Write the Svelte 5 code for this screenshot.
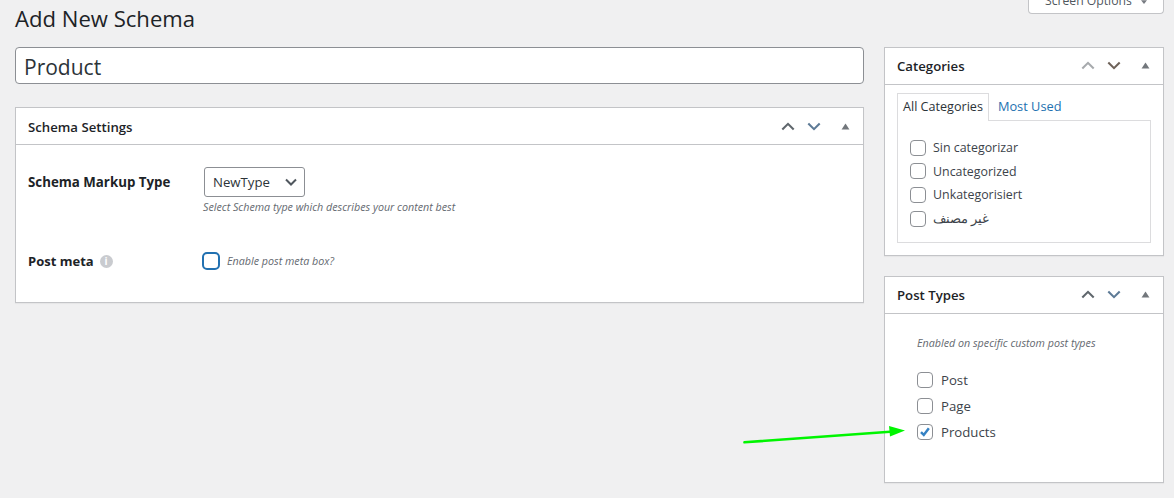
<script>
  const cats = ['Sin categorizar', 'Uncategorized', 'Unkategorisiert', 'غير مصنف'];
  const types = [
    { label: 'Post', on: false },
    { label: 'Page', on: false },
    { label: 'Products', on: true }
  ];
</script>

{#snippet handles(upDim, downWarm)}
  <div class="handles">
    <svg class="chev" class:dim={upDim} viewBox="0 0 16 10"><path d="M1.5 8.5 8 2l6.5 6.5" /></svg>
    <svg class="chev" class:warm={downWarm} viewBox="0 0 16 10"><path d="M1.5 1.5 8 8l6.5-6.5" /></svg>
    <svg class="tri" viewBox="0 0 10 8"><path d="M5 .5 9.5 7.5H.5z" /></svg>
  </div>
{/snippet}

<div class="page">
  <div class="topbar">
    <h1>Add New Schema</h1>
    <div class="screen-options"><span>Screen Options</span><svg viewBox="0 0 8 5"><path d="M0 0h8L4 5z" /></svg></div>
  </div>

  <div class="columns">
    <main>
      <div class="title-input">Product</div>

      <section class="box settings">
        <header><h2>Schema Settings</h2>{@render handles(false, false)}</header>
        <div class="settings-body">
          <div class="row first">
            <div class="label">Schema Markup Type</div>
            <div>
              <div class="select">NewType
                <svg viewBox="0 0 12 8"><path d="M1 1.5 6 6.5l5-5" /></svg>
              </div>
              <p class="hint sel-hint">Select Schema type which describes your content best</p>
            </div>
          </div>
          <div class="row second">
            <div class="label">Post meta <span class="info">i</span></div>
            <div class="meta">
              <span class="check focus"></span>
              <span class="hint">Enable post meta box?</span>
            </div>
          </div>
        </div>
      </section>
    </main>

    <aside>
      <section class="box cats">
        <header><h2>Categories</h2>{@render handles(true, true)}</header>
        <div class="cats-body">
          <div class="tabs"><span class="tab active">All Categories</span><span class="tab link">Most Used</span></div>
          <div class="tab-panel">
            {#each cats as c, i}
              <div class="cat" class:ar={i === 3}><span class="check"></span><span class="cat-text">{c}</span></div>
            {/each}
          </div>
        </div>
      </section>

      <section class="box types">
        <header><h2>Post Types</h2>{@render handles(false, false)}</header>
        <div class="types-body">
          <p class="hint">Enabled on specific custom post types</p>
          <div class="type-list">
            {#each types as t}
              <div class="type">
                <span class="check">
                  {#if t.on}
                    <svg viewBox="0 0 16 16"><path d="M3.4 8.2 6.6 11.4 12.4 3.6" /></svg>
                  {/if}
                </span>
                <span>{t.label}</span>
              </div>
            {/each}
          </div>
        </div>
      </section>
    </aside>
  </div>

  <svg class="arrow" viewBox="0 0 170 30" aria-hidden="true">
    <path class="shaft" d="M3.5 22.3 149 11.7" />
    <path class="head" d="M148 6 164 10.5 149 16.5z" />
  </svg>
</div>

<style>
  :global(body) {
    margin: 0;
    background: #f0f0f1;
  }
  .page {
    position: relative;
    width: 1174px;
    height: 498px;
    overflow: hidden;
    box-sizing: border-box;
    padding: 0 10px 0 15px;
    font-family: "Open Sans", "Noto Sans", sans-serif;
    font-size: 13px;
    color: #3c434a;
  }
  .topbar {
    display: flex;
    justify-content: space-between;
    align-items: flex-start;
    height: 47px;
  }
  h1 {
    margin: 3px 0 0;
    font-size: 22.1px;
    line-height: 30px;
    font-weight: 400;
    color: #1d2327;
  }
  .screen-options {
    box-sizing: border-box;
    width: 136px;
    height: 14px;
    background: #fff;
    border: 1px solid #c3c4c7;
    border-top: 0;
    border-radius: 0 0 4px 4px;
    color: #50575e;
    font-size: 12.2px;
    display: flex;
    justify-content: flex-start;
    align-items: flex-start;
    padding-left: 16px;
  }
  .screen-options span {
    line-height: 0;
    margin-top: 1px;
  }
  .screen-options svg {
    width: 6px;
    height: 4px;
    margin-left: 9px;
    fill: #787c82;
  }
  .columns {
    display: flex;
    gap: 20px;
    align-items: flex-start;
  }
  main {
    width: 849px;
  }
  aside {
    width: 280px;
    display: flex;
    flex-direction: column;
    gap: 20px;
  }
  .title-input {
    box-sizing: border-box;
    height: 37px;
    background: #fff;
    border: 1px solid #8c8f94;
    border-radius: 4px;
    padding: 3px 8px 0;
    font-size: 21px;
    line-height: 33px;
    color: #2c3338;
    margin-bottom: 23px;
  }
  .box {
    box-sizing: border-box;
    background: #fff;
    border: 1px solid #c3c4c7;
    box-shadow: 0 1px 1px rgba(0, 0, 0, .04);
  }
  header {
    box-sizing: border-box;
    height: 37px;
    display: flex;
    align-items: center;
    justify-content: space-between;
    padding: 0 13px 0 12px;
    border-bottom: 1px solid #c3c4c7;
  }
  .settings header {
    padding-top: 2px;
  }
  h2 {
    margin: 0;
    font-size: 13.2px;
    font-weight: 600;
    color: #1d2327;
  }
  .handles {
    display: flex;
    align-items: center;
    gap: 12px;
    margin-top: -2px;
  }
  .chev {
    width: 14px;
    height: 9px;
    fill: none;
    stroke: #5f666c;
    stroke-width: 2.4;
  }
  .chev + .chev {
    stroke: #5d7a96;
  }
  .chev.dim {
    stroke: #a7aaad;
  }
  .chev.warm {
    stroke: #6e6259;
  }
  .tri {
    width: 9px;
    height: 7px;
    fill: #72777c;
    margin-left: 8px;
  }
  .settings {
    height: 196px;
  }
  .settings-body {
    padding: 0 12px;
  }
  .row {
    display: flex;
    align-items: flex-start;
  }
  .row.first {
    padding-top: 22px;
  }
  .row.second {
    padding-top: 38px;
    align-items: center;
  }
  .label {
    width: 175px;
    font-weight: 700;
    font-size: 13.3px;
    color: #1d2327;
    display: flex;
    align-items: center;
    gap: 5px;
  }
  .row.first .label {
    line-height: 30px;
  }
  .row.second .label {
    font-size: 13px;
    gap: 6px;
  }
  .info {
    width: 13px;
    height: 13px;
    border-radius: 50%;
    background: #c9cbcf;
    color: #fff;
    font-size: 10px;
    line-height: 13px;
    text-align: center;
    margin-top: 1px;
  }
  .select {
    box-sizing: border-box;
    width: 101px;
    height: 30px;
    margin-left: 1px;
    border: 1px solid #8c8f94;
    border-radius: 3px;
    background: #fff;
    padding-left: 8px;
    line-height: 28px;
    font-size: 13.2px;
    color: #2c3338;
    display: flex;
    align-items: center;
    justify-content: space-between;
  }
  .select svg {
    width: 12px;
    height: 8px;
    margin-right: 7px;
    fill: none;
    stroke: #50575e;
    stroke-width: 2;
  }
  .hint {
    margin: 0;
    font-size: 10.72px;
    font-style: italic;
    color: #646970;
  }
  .sel-hint {
    margin-top: 3px;
  }
  .meta {
    display: flex;
    align-items: center;
    gap: 7px;
    margin-left: -1px;
  }
  .check {
    box-sizing: border-box;
    flex: none;
    width: 16px;
    height: 16px;
    display: block;
    background: #fff;
    border: 1px solid #8c8f94;
    border-radius: 4px;
  }
  .check.focus {
    width: 18px;
    height: 18px;
    border: 2px solid #2271b1;
    border-radius: 5px;
  }
  .check svg {
    display: block;
    width: 14px;
    height: 14px;
    fill: none;
    stroke: #3582c4;
    stroke-width: 2.8;
  }
  .cats {
    height: 209px;
  }
  .cats-body {
    padding: 8px 12px 0;
  }
  .tabs {
    display: flex;
    height: 27px;
    font-size: 12.6px;
  }
  .tab {
    box-sizing: border-box;
    height: 27px;
    line-height: 26px;
    padding: 0 5px;
  }
  .tab.active {
    background: #fff;
    border: 1px solid #dcdcde;
    border-bottom: 0;
    color: #2c3338;
    position: relative;
    z-index: 1;
    height: 28px;
  }
  .tab.link {
    padding: 0 0 0 10px;
    margin-left: -1px;
    font-size: 12.8px;
    color: #2271b1;
  }
  .tab-panel {
    box-sizing: border-box;
    height: 123px;
    border: 1px solid #dcdcde;
    padding: 15px 12px 0;
  }
  .cat {
    display: flex;
    align-items: center;
    gap: 7px;
    height: 23.6px;
    font-size: 12.4px;
  }
  .cat.ar {
    font-size: 13.2px;
    font-weight: 300;
  }
  .cat.ar .cat-text {
    margin-top: -2px;
  }
  .types {
    height: 207px;
  }
  .types-body {
    padding: 22px 32px 0;
  }
  .type-list {
    margin-top: 17px;
  }
  .type {
    display: flex;
    align-items: center;
    gap: 8px;
    height: 26px;
    font-size: 13.2px;
  }
  .arrow {
    position: absolute;
    left: 741px;
    top: 420px;
    width: 170px;
    height: 30px;
    pointer-events: none;
  }
  .shaft {
    stroke: #00f500;
    stroke-width: 2.6;
    stroke-linecap: round;
    fill: none;
  }
  .head {
    fill: #00f500;
  }
</style>
